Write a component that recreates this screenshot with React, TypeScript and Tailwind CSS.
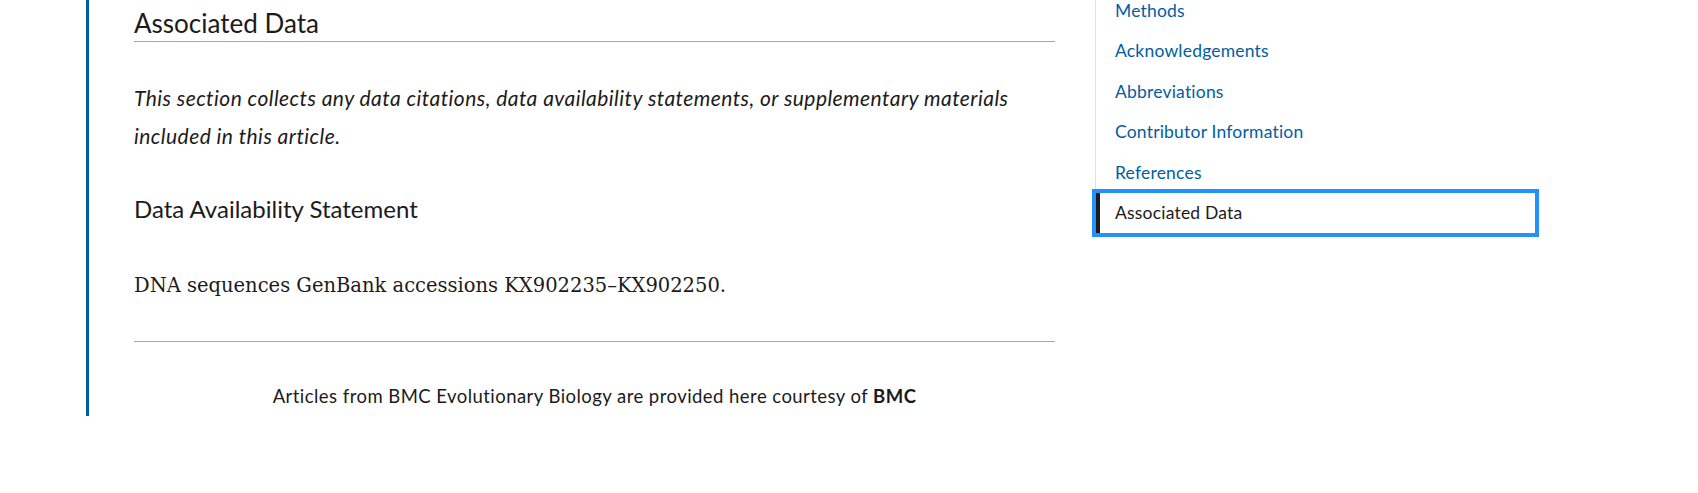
import React from 'react';

const sans = "font-['Lato','Noto_Sans',sans-serif]";

const navItems = ['Methods', 'Acknowledgements', 'Abbreviations', 'Contributor Information', 'References', 'Associated Data'];

export default function App() {
  return (
    <div className={`flex h-[493px] w-full overflow-hidden bg-white text-[#1b1b1b] ${sans}`}>
      {/* Article column */}
      <main className="ml-[86px] flex h-[416px] w-[969px] flex-col border-l-[3px] border-[#005ea2] pl-[45px] pt-[8px]">
        <h2 className="border-b border-[#9aabbb] pb-[3px] text-[26px] leading-[30px]">Associated Data</h2>
        <p className="mt-[37px] max-w-[900px] text-[21px] italic leading-[37.5px] tracking-[0.45px]">
          This section collects any data citations, data availability statements, or supplementary materials included in this article.
        </p>
        <h3 className="mt-[40px] text-[24px] leading-[30px]">Data Availability Statement</h3>
        <p className="mt-[47px] font-['DejaVu_Serif',serif] text-[19.5px] leading-[30px]">
          DNA sequences GenBank accessions KX902235–KX902250.
        </p>
        <div className="mt-[40px] border-t border-[#9aabbb]" />
        <p className="mt-[42px] text-center text-[18.5px] leading-[24px] tracking-[0.45px]">
          Articles from BMC Evolutionary Biology are provided here courtesy of <strong className="font-bold">BMC</strong>
        </p>
      </main>

      {/* Page navigation */}
      <nav className="ml-[40px] mt-[-9px] w-[440px]">
        <ul className="border-l border-[#dfe1e2]">
          {navItems.map((item) => {
            const active = item === 'Associated Data';
            return (
              <li
                key={item}
                className={
                  active
                    ? 'border-l-4 border-[#1b1b1b] py-[8px] pl-[15px] text-[17.5px] leading-[24.4px] tracking-[0.2px] text-[#1b1b1b] outline-4 outline-[#2491ff]'
                    : 'py-[8px] pl-[19px] text-[17.5px] leading-[24.4px] tracking-[0.2px] text-[#005ea2]'
                }
              >
                {item}
              </li>
            );
          })}
        </ul>
      </nav>
    </div>
  );
}
